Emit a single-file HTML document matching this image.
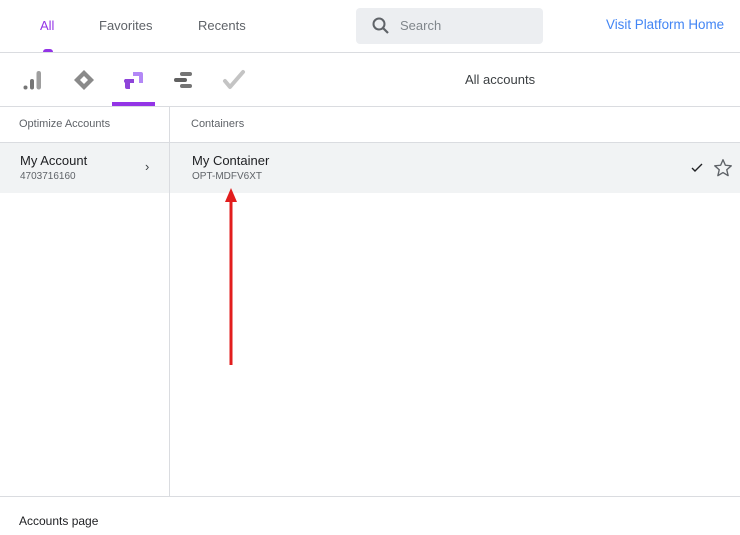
<!DOCTYPE html>
<html><head><style>
body{margin:0;width:740px;height:535px;background:#fff;font-family:"Liberation Sans",sans-serif;position:relative;overflow:hidden;color:#202124}
.a{position:absolute}
.hl{position:absolute;left:0;width:740px;height:1px;background:#dadce0}
</style></head><body>
<div class="a" style="left:40px;top:18px;font-size:13px;color:#9334e6">All</div>
<div class="a" style="left:43px;top:49px;width:10px;height:4px;border-radius:3px 3px 0 0;background:#9334e6"></div>
<div class="a" style="left:99px;top:18px;font-size:13px;color:#5f6368">Favorites</div>
<div class="a" style="left:198px;top:18px;font-size:13px;color:#5f6368">Recents</div>
<div class="a" style="left:356px;top:8px;width:187px;height:36px;background:#eceef1;border-radius:4px"></div>
<svg class="a" style="left:371px;top:16px" width="20" height="20" viewBox="0 0 20 20"><circle cx="8" cy="8" r="5.5" fill="none" stroke="#5f6368" stroke-width="2"/><path d="M12 12l5 5" stroke="#5f6368" stroke-width="2.2"/></svg>
<div class="a" style="left:400px;top:18px;font-size:13px;color:#80868b">Search</div>
<div class="a" style="left:606px;top:17px;font-size:13.4px;color:#4285f4">Visit Platform Home</div>
<div class="hl" style="top:52px"></div>
<svg class="a" style="left:22px;top:68px" width="24" height="24"><circle cx="3.5" cy="19.5" r="2" fill="#757575"/><rect x="8" y="11" width="4" height="10.5" rx="2" fill="#757575"/><rect x="14.5" y="3" width="4.5" height="18.5" rx="2.2" fill="#9e9e9e"/></svg>
<svg class="a" style="left:72px;top:68px" width="24" height="24"><path d="M12 2L22 12 12 22 2 12z" fill="#8a8a8a"/><path d="M12 8L16 12 12 16 8 12z" fill="#fff"/></svg>
<svg class="a" style="left:122px;top:68px" width="24" height="24"><path d="M11 4h8a2 2 0 0 1 2 2v9h-4v-7h-6z" fill="#b388f6"/><path d="M3 11h9v4h-4v6H5a2 2 0 0 1-2-2z" fill="#8e44d9"/><circle cx="4" cy="13" r="2" fill="#8e44d9"/></svg>
<div class="a" style="left:112px;top:102px;width:43px;height:4px;background:#9334e6"></div>
<svg class="a" style="left:172px;top:68px" width="24" height="24"><rect x="8" y="4" width="12" height="4" rx="2" fill="#757575"/><rect x="2" y="10" width="13" height="4" rx="2" fill="#616161"/><rect x="8" y="16" width="12" height="4" rx="2" fill="#757575"/></svg>
<svg class="a" style="left:222px;top:68px" width="24" height="24"><path d="M3 13l5 6L21 4" fill="none" stroke="#c4c4c4" stroke-width="4" stroke-linecap="round" stroke-linejoin="round"/></svg>
<div class="a" style="left:465px;top:72px;font-size:13px;color:#3c4043">All accounts</div>
<div class="hl" style="top:106px"></div>
<div class="a" style="left:169px;top:107px;width:1px;height:389px;background:#dadce0"></div>
<div class="a" style="left:19px;top:118px;font-size:11px;color:#5f6368">Optimize Accounts</div>
<div class="a" style="left:191px;top:118px;font-size:11px;color:#5f6368">Containers</div>
<div class="hl" style="top:142px"></div>
<div class="a" style="left:0;top:143px;width:740px;height:50px;background:#f1f3f4"></div>
<div class="a" style="left:169px;top:143px;width:1px;height:50px;background:#dadce0"></div>
<div class="a" style="left:20px;top:153px;font-size:13px;color:#202124">My Account</div>
<div class="a" style="left:20px;top:171px;font-size:10px;color:#5f6368">4703716160</div>
<div class="a" style="left:145px;top:159px;font-size:13px;color:#3c4043">›</div>
<div class="a" style="left:192px;top:153px;font-size:13px;color:#202124">My Container</div>
<div class="a" style="left:192px;top:171px;font-size:10px;color:#5f6368">OPT-MDFV6XT</div>
<svg class="a" style="left:690px;top:162px" width="14" height="12"><path d="M2 6l3 3 7-7" fill="none" stroke="#202124" stroke-width="1.4"/></svg>
<svg class="a" style="left:712px;top:157px" width="22" height="22" viewBox="0 0 24 24"><path d="M12 3l2.6 6 6.4.6-4.9 4.3 1.5 6.4L12 17l-5.6 3.3 1.5-6.4L3 9.6l6.4-.6z" fill="none" stroke="#5f6368" stroke-width="1.5" stroke-linejoin="round"/></svg>
<svg class="a" style="left:220px;top:185px" width="22" height="182"><path d="M11 180V14" stroke="#e21d1d" stroke-width="3"/><path d="M5 17L11 3l6 14z" fill="#e21d1d"/></svg>
<div class="hl" style="top:496px"></div>
<div class="a" style="left:19px;top:514px;font-size:12px;color:#202124">Accounts page</div>
</body></html>
